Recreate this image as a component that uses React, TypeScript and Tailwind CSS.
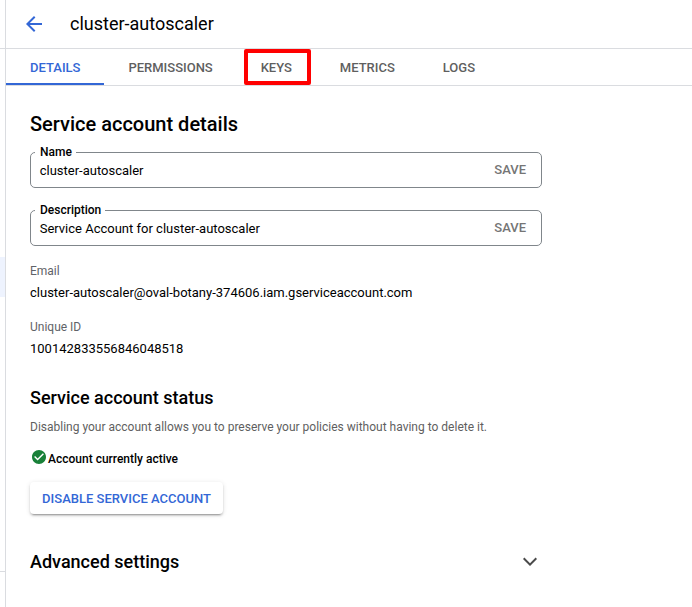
import React from "react";

const tabs = ["DETAILS", "PERMISSIONS", "KEYS", "METRICS", "LOGS"];

function Field({ label, value }: { label: string; value: string }) {
  return (
    <fieldset className="h-[42px] w-[512px] rounded-[5px] border border-[#80868b] pl-[4px] pr-[15px]">
      <legend className="h-3 pl-[5px] pr-[4px] text-[12px] leading-[12px] font-medium text-black">{label}</legend>
      <div className="flex h-[24px] items-center justify-between pl-[4.7px] text-[13px] leading-6">
        <span className="pt-[2px]">{value}</span>
        <span className="font-medium text-[#757575]">SAVE</span>
      </div>
    </fieldset>
  );
}

function Property({ label, value }: { label: string; value: string }) {
  return (
    <div className="h-14">
      <div className="h-5 text-[12px] leading-5 text-[#5f6368]">{label}</div>
      <div className="mt-[2px] h-5 text-[13px] leading-5">{value}</div>
    </div>
  );
}

export default function App() {
  return (
    <div className="flex h-[607px] w-[692px] overflow-hidden bg-white font-['Roboto',sans-serif] text-black">
      <aside className="flex w-[6px] shrink-0 flex-col border-r border-[#dadce0]">
        <div className="h-[49px] border-b border-[#dadce0]" />
        <div className="mt-[208px] h-10 bg-[#eef3fe]" />
        <div className="mt-[274px] h-px bg-[#dadce0]" />
      </aside>
      <main className="min-w-0 flex-1">
        <header className="flex h-[49px] items-center border-b border-[#dadce0] pl-4">
          <svg className="size-6" viewBox="0 0 24 24" fill="#3367d6">
            <path d="M20 11H7.83l5.59-5.59L12 4l-8 8 8 8 1.41-1.41L7.83 13H20v-2z" />
          </svg>
          <h1 className="ml-6 text-[18px] leading-6">cluster-autoscaler</h1>
        </header>
        <nav className="flex h-[37px] border-b border-[#dadce0] text-[13px] font-medium text-[#5f5f5f]">
          {tabs.map((tab) => (
            <div
              key={tab}
              className={
                tab === "DETAILS"
                  ? "relative flex items-center border-b-2 border-[#3367d6] px-6 pt-[4px] text-[#3367d6]"
                  : "relative -ml-[0.1px] flex items-center px-6 pt-[2px]"
              }
            >
              {tab}
              {tab === "KEYS" && (
                <span className="absolute top-0 left-[7px] h-[36px] w-[67px] rounded-[2px] border-4 border-[#ff0000]" />
              )}
            </div>
          ))}
        </nav>
        <div className="w-[536px] pl-6">
          <h2 className="mt-6 h-7 text-[20px] leading-7 font-medium">Service account details</h2>
          <div className="mt-2 flex flex-col gap-4">
            <Field label="Name" value="cluster-autoscaler" />
            <Field label="Description" value="Service Account for cluster-autoscaler" />
          </div>
          <div className="mt-[15px]">
            <Property label="Email" value="cluster-autoscaler@oval-botany-374606.iam.gserviceaccount.com" />
            <Property label="Unique ID" value="100142833556846048518" />
          </div>
          <h2 className="mt-[13px] h-6 text-[18px] leading-6 font-medium">Service account status</h2>
          <p className="mt-[7px] h-5 whitespace-nowrap text-[12px] leading-5 text-[#5f5f5f]">
            Disabling your account allows you to preserve your policies without having to delete it.
          </p>
          <div className="mt-3 flex h-5 items-center text-[12px] font-medium">
            <svg className="mb-[4px] ml-[2px] size-[14px]" viewBox="2 2 20 20" fill="#188038">
              <path d="M12 2C6.48 2 2 6.48 2 12s4.48 10 10 10 10-4.48 10-10S17.52 2 12 2zm-2 15l-5-5 1.41-1.41L10 14.17l7.59-7.59L19 8l-9 9z" />
            </svg>
            <span className="ml-[2px]">Account currently active</span>
          </div>
          <button className="mt-[13px] flex h-8 w-[193px] items-center justify-center rounded-[4px] bg-white pt-[2px] text-[13px] font-medium whitespace-nowrap text-[#3367d6] shadow-[0_3px_1px_-2px_rgba(0,0,0,0.2),0_2px_2px_0_rgba(0,0,0,0.14),0_1px_5px_0_rgba(0,0,0,0.12)]">
            DISABLE SERVICE ACCOUNT
          </button>
          <div className="mt-9 flex h-6 items-center justify-between">
            <h2 className="text-[18px] leading-6 font-medium">Advanced settings</h2>
            <svg className="size-6" viewBox="0 0 24 24" fill="#4a4a4a">
              <path d="M6.41 7.59L12 13.17l5.59-5.58L19 9l-7 7-7-7z" />
            </svg>
          </div>
        </div>
      </main>
    </div>
  );
}
